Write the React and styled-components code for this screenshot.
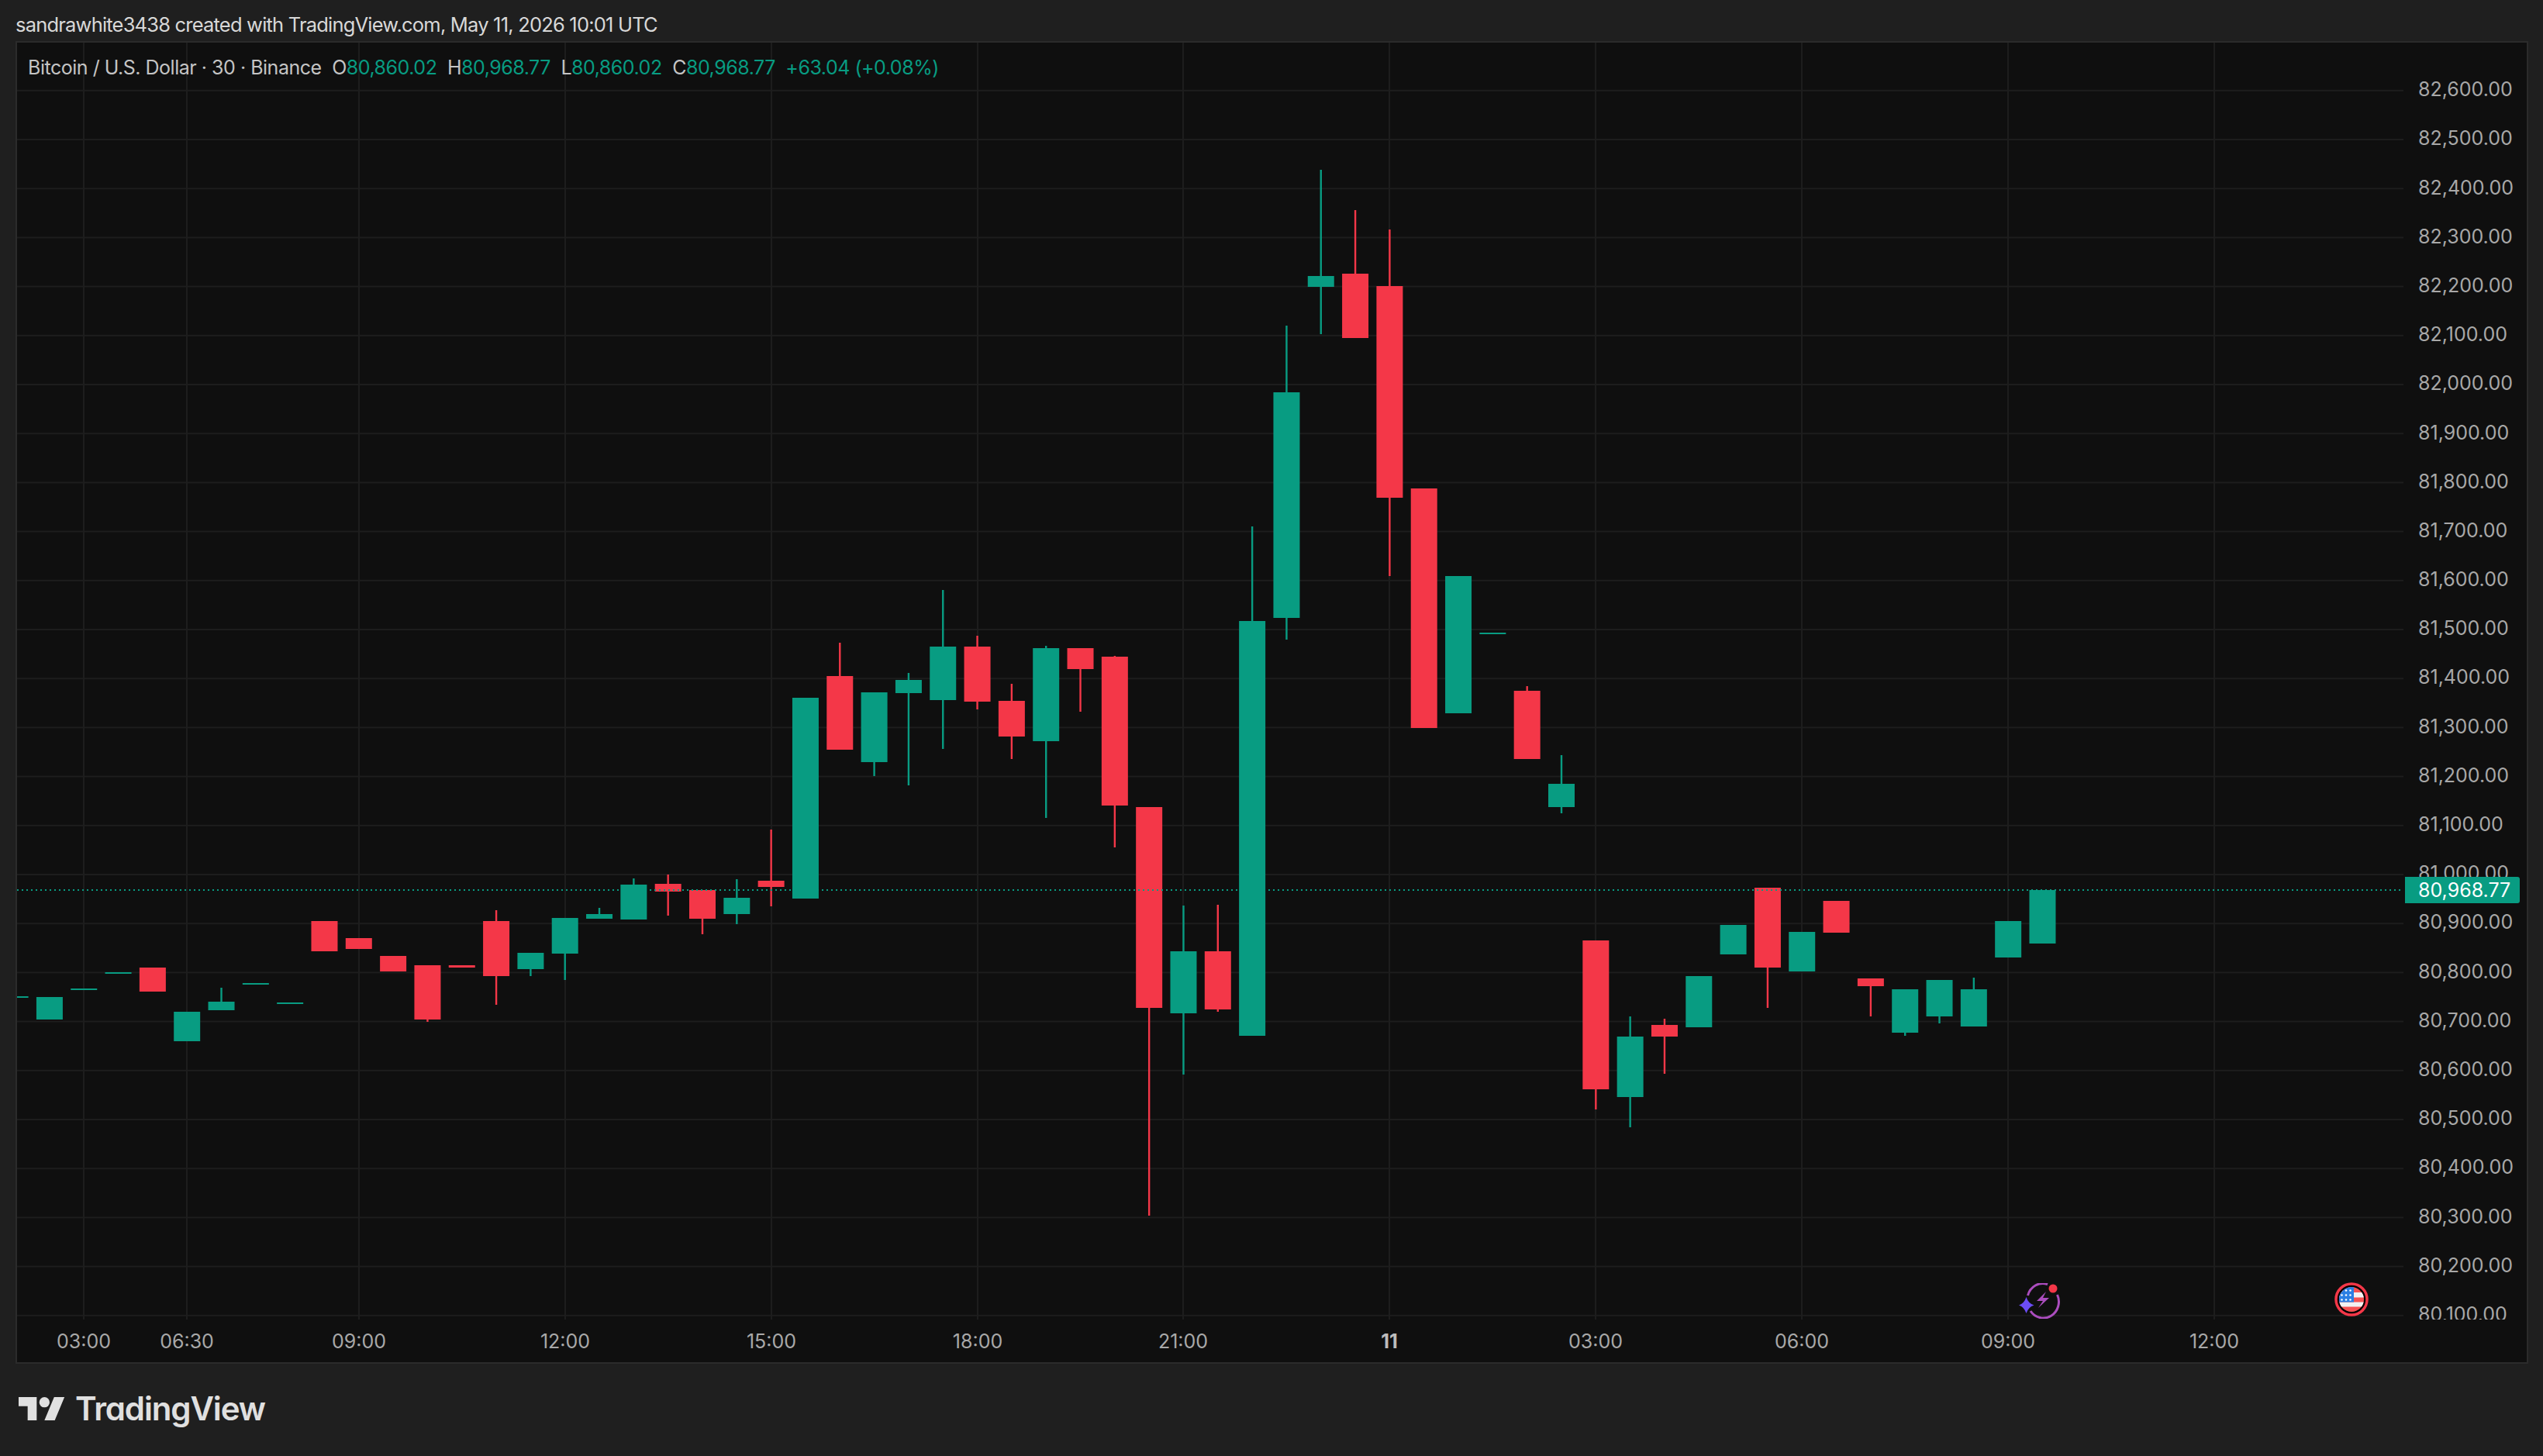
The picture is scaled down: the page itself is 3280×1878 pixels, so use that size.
import React from "react";
import styled, { createGlobalStyle } from "styled-components";

const GREEN = "#089c82";
const RED = "#f43748";
const FONT = `Inter, "Liberation Sans", sans-serif`;

const Global = createGlobalStyle`
  html, body { margin: 0; padding: 0; background: #1f1f1f; }
  #root { width: 3280px; height: 1878px; }
`;

const Page = styled.div`
  width: 3280px;
  height: 1878px;
  display: flex;
  flex-direction: column;
  background: #1f1f1f;
  font-family: ${FONT};
  overflow: hidden;
`;
const Caption = styled.div`
  height: 53px;
  box-sizing: border-box;
  padding: 15px 0 0 20px;
  font-size: 25.5px;
  line-height: 34px;
  letter-spacing: -0.8px;
  color: #d8d8d8;
  white-space: nowrap;
`;
const Frame = styled.div`
  width: 3241px;
  height: 1706px;
  margin-left: 20px;
  box-sizing: border-box;
  border: 2px solid #2b2b2b;
  background: #0f0f0f;
  display: grid;
  grid-template-columns: 3078px 159px;
  grid-template-rows: 1647px 55px;
`;
const Pane = styled.div`
  position: relative;
  overflow: hidden;
`;
const ChartSvg = styled.svg`
  display: block;
`;
const Legend = styled.div`
  position: absolute;
  left: 14px;
  top: 15px;
  display: flex;
  align-items: center;
  gap: 13.5px;
  font-size: 25px;
  line-height: 34px;
  letter-spacing: -0.48px;
  color: #c4c4c4;
  white-space: nowrap;
`;
const Ohlc = styled.span`
  color: ${GREEN};
`;
const Field = styled.span``;
const Marker = styled.svg`
  position: absolute;
  left: ${(p) => p.$left}px;
  top: ${(p) => p.$top}px;
`;
const PriceAxis = styled.div`
  position: relative;
  overflow: hidden;
  display: flex;
  flex-direction: column;
  box-sizing: border-box;
  padding: 28.6px 0 0 19px;
`;
const PriceLabel = styled.div`
  flex: 0 0 63.2px;
  display: flex;
  align-items: center;
  font-size: 25px;
  color: #a8a8a8;
  white-space: nowrap;
`;
const LastTag = styled.div`
  position: absolute;
  left: 2px;
  top: 1076px;
  width: 148px;
  height: 34px;
  box-sizing: border-box;
  padding-left: 17px;
  display: flex;
  align-items: center;
  background: ${GREEN};
  border-radius: 0 3px 3px 0;
  color: #ffffff;
  font-size: 25px;
`;
const TimeAxis = styled.div`
  grid-column: 1 / span 2;
  display: flex;
  padding-left: 86px;
  align-items: center;
`;
const Tick = styled.div`
  flex: 0 0 ${(p) => p.$gap}px;
  width: ${(p) => p.$gap}px;
`;
const TickLabel = styled.span`
  display: inline-block;
  transform: translateX(-50%);
  font-size: 25px;
  font-weight: ${(p) => (p.$bold ? 700 : 400)};
  color: ${(p) => (p.$bold ? "#bcbcbc" : "#a8a8a8")};
  white-space: nowrap;
`;
const Footer = styled.div`
  flex: 1;
  display: flex;
  align-items: flex-start;
  padding: 43px 0 0 24px;
  gap: 13px;
  color: #e0e0e0;
`;
const LogoMark = styled.svg`
  display: block;
  flex: none;
`;
const Wordmark = styled.span`
  font-size: 42px;
  line-height: 30px;
  font-weight: 600;
  letter-spacing: -1.15px;
  font-feature-settings: "cv11" 1;
`;

// [colour, bodyTop, bodyBottom, wickTop, wickBottom]
const G = GREEN;
const R = RED;
const candles = [
  [G, 1285, 1287], [G, 1286, 1315], [G, 1275, 1277], [G, 1254, 1256],
  [R, 1248, 1279], [G, 1305, 1343], [G, 1292, 1303, 1274], [G, 1268, 1270],
  [G, 1293, 1295], [R, 1188, 1227], [R, 1210, 1224], [R, 1233, 1253],
  [R, 1245, 1315, 1245, 1318], [R, 1245, 1248], [R, 1188, 1259, 1174, 1296],
  [G, 1229, 1250, 1229, 1259], [G, 1184, 1230, 1184, 1264], [G, 1179, 1185, 1171],
  [G, 1141, 1186, 1133], [R, 1140, 1150, 1128, 1181], [R, 1148, 1185, 1148, 1205],
  [G, 1158, 1179, 1134, 1192], [R, 1136, 1144, 1070, 1169], [G, 900, 1159],
  [R, 872, 967, 829], [G, 893, 983, 893, 1001], [G, 877, 894, 868, 1013],
  [G, 834, 903, 761, 966], [R, 834, 905, 820, 915], [R, 904, 950, 882, 979],
  [G, 836, 956, 833, 1055], [R, 836, 863, 836, 918], [R, 847, 1039, 846, 1093],
  [R, 1041, 1300, 1041, 1568], [G, 1227, 1307, 1168, 1386], [R, 1227, 1302, 1167, 1305],
  [G, 801, 1336, 679], [G, 506, 797, 420, 825], [G, 356, 370, 219, 431],
  [R, 353, 436, 271], [R, 369, 642, 296, 743], [R, 630, 939], [G, 743, 920],
  [G, 816, 818], [R, 891, 979, 885], [G, 1011, 1041, 974, 1049],
  [R, 1213, 1405, 1213, 1431], [G, 1337, 1415, 1311, 1454], [R, 1322, 1337, 1314, 1385],
  [G, 1259, 1325], [G, 1193, 1231], [R, 1145, 1248, 1145, 1300], [G, 1202, 1253],
  [R, 1162, 1203], [R, 1262, 1272, 1262, 1311], [G, 1276, 1332, 1276, 1336],
  [G, 1264, 1311, 1264, 1320], [G, 1276, 1324, 1261], [G, 1188, 1235], [G, 1148, 1217],
];
const cx = (i) => 19.6 + 44.32 * i;

const gridY = Array.from({ length: 26 }, (_, n) => 116.8 + 63.2 * n);
const ticks = [
  { x: 108, t: "03:00" }, { x: 241, t: "06:30" }, { x: 463, t: "09:00" },
  { x: 729, t: "12:00" }, { x: 995, t: "15:00" }, { x: 1261, t: "18:00" },
  { x: 1526, t: "21:00" }, { x: 1792, t: "11", bold: true }, { x: 2058, t: "03:00" },
  { x: 2324, t: "06:00" }, { x: 2590, t: "09:00" }, { x: 2856, t: "12:00" },
];
const prices = Array.from({ length: 26 }, (_, n) =>
  (82600 - n * 100).toLocaleString("en-US", { minimumFractionDigits: 2 })
);

function Chart() {
  return (
    <ChartSvg width="3078" height="1647" viewBox="22 55 3078 1647">
      {gridY.filter((y) => y < 1700).map((y) => (
        <rect key={y} x="22" y={y - 1} width="3078" height="2" fill="#1d1d1d" />
      ))}
      {ticks.map((t) => (
        <rect key={t.x} x={t.x - 1} y="55" width="2" height="1647" fill="#1d1d1d" />
      ))}
      {candles.map(([c, top, bottom, wt, wb], i) => {
        const x = cx(i);
        const left = Math.max(22, x - 17);
        return (
          <g key={i} fill={c}>
            {(wt !== undefined || wb !== undefined) && (
              <rect x={x - 1.2} y={wt ?? top} width="2.4" height={(wb ?? bottom) - (wt ?? top)} />
            )}
            <rect x={left} y={top} width={x + 17 - left} height={bottom - top} />
          </g>
        );
      })}
      <line x1="22" x2="3100" y1="1148" y2="1148" stroke={GREEN} strokeWidth="2" strokeDasharray="2 4" />
    </ChartSvg>
  );
}

function BoltMarker() {
  return (
    <Marker $left={2582} $top={1600} width="54" height="46" viewBox="0 0 54 46" fill="none">
      <path d="M11.5 16A20 21 0 0 1 37 1.5" stroke="#ab4dbe" strokeWidth="3" />
      <path d="M49.5 15A20 21 0 0 1 15 36" stroke="#ab4dbe" strokeWidth="3" />
      <path d="M35 11 23 23h8l-6 9 14-13h-8z" fill="#ab4dbe" />
      <path d="M9.5 18Q12 26 19.5 28.5 12 31 9.5 39 7 31 0 28.5 7 26 9.5 18Z" fill="#6b4cf6" />
      <circle cx="44" cy="7" r="5.5" fill="#f43748" />
    </Marker>
  );
}

function FlagMarker() {
  const stars = [];
  for (let r = 0; r < 3; r++)
    for (let c = 0; c < 3; c++)
      stars.push(<circle key={`${r}${c}`} cx={9.5 + c * 5.5} cy={10.5 + r * 6} r="1.3" fill="#fff" />);
  return (
    <Marker $left={2989.4} $top={1599} width="44" height="44" viewBox="0 0 44 44">
      <defs>
        <clipPath id="flag-disc"><circle cx="22" cy="22" r="16" /></clipPath>
      </defs>
      <circle cx="22" cy="22" r="20" fill="#000" stroke="#f43748" strokeWidth="3.5" />
      <g clipPath="url(#flag-disc)">
        <rect x="6" y="6" width="32" height="32" fill="#f55252" />
        <rect x="6" y="13" width="32" height="6.5" fill="#f2f2f2" />
        <rect x="6" y="25.5" width="32" height="6" fill="#f2f2f2" />
        <rect x="6" y="6" width="19" height="19.5" fill="#2b7fe3" />
        {stars}
      </g>
    </Marker>
  );
}

export default function App() {
  return (
    <Page>
      <Global />
      <Caption>sandrawhite3438 created with TradingView.com, May 11, 2026 10:01 UTC</Caption>
      <Frame>
        <Pane>
          <Chart />
          <Legend>
            <Field>Bitcoin / U.S. Dollar · 30 · Binance</Field>
            <Field>O<Ohlc>80,860.02</Ohlc></Field>
            <Field>H<Ohlc>80,968.77</Ohlc></Field>
            <Field>L<Ohlc>80,860.02</Ohlc></Field>
            <Field>C<Ohlc>80,968.77</Ohlc></Field>
            <Ohlc>+63.04 (+0.08%)</Ohlc>
          </Legend>
          <BoltMarker />
          <FlagMarker />
        </Pane>
        <PriceAxis>
          {prices.map((p) => <PriceLabel key={p}>{p}</PriceLabel>)}
          <LastTag>80,968.77</LastTag>
        </PriceAxis>
        <TimeAxis>
          {ticks.map((t, i) => (
            <Tick key={t.x} $gap={i < ticks.length - 1 ? ticks[i + 1].x - t.x : 200}>
              <TickLabel $bold={t.bold}>{t.t}</TickLabel>
            </Tick>
          ))}
        </TimeAxis>
      </Frame>
      <Footer>
        <LogoMark width="60" height="30" viewBox="0 4 36 18" fill="currentColor">
          <path d="M14 22H7V11H0V4h14v18zM28 22h-8l7.5-18h8L28 22z" />
          <circle cx="20" cy="8" r="4" />
        </LogoMark>
        <Wordmark>TradingView</Wordmark>
      </Footer>
    </Page>
  );
}
